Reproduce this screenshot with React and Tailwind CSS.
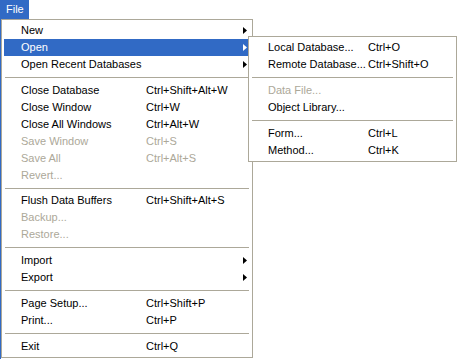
import React from "react";

const Arrow = ({ white }) => (
  <svg width="4" height="7" viewBox="0 0 4 7" className="block">
    <polygon points="0,0 4,3.5 0,7" fill={white ? "#ffffff" : "#000000"} />
  </svg>
);

const mainItems = [
  { label: "New", sub: true },
  { label: "Open", sub: true, active: true },
  { label: "Open Recent Databases", sub: true },
  { sep: true },
  { label: "Close Database", sc: "Ctrl+Shift+Alt+W" },
  { label: "Close Window", sc: "Ctrl+W" },
  { label: "Close All Windows", sc: "Ctrl+Alt+W" },
  { label: "Save Window", sc: "Ctrl+S", dis: true },
  { label: "Save All", sc: "Ctrl+Alt+S", dis: true },
  { label: "Revert...", dis: true },
  { sep: true },
  { label: "Flush Data Buffers", sc: "Ctrl+Shift+Alt+S" },
  { label: "Backup...", dis: true },
  { label: "Restore...", dis: true },
  { sep: true },
  { label: "Import", sub: true },
  { label: "Export", sub: true },
  { sep: true },
  { label: "Page Setup...", sc: "Ctrl+Shift+P" },
  { label: "Print...", sc: "Ctrl+P" },
  { sep: true },
  { label: "Exit", sc: "Ctrl+Q" },
];

const subItems = [
  { label: "Local Database...", sc: "Ctrl+O" },
  { label: "Remote Database...", sc: "Ctrl+Shift+O" },
  { sep: true },
  { label: "Data File...", dis: true },
  { label: "Object Library..." },
  { sep: true },
  { label: "Form...", sc: "Ctrl+L" },
  { label: "Method...", sc: "Ctrl+K" },
];

function Row({ it, labelW }) {
  if (it.sep) {
    return (
      <div className="h-[9px] flex items-center px-[1px]">
        <div className="h-px w-full bg-[#ACA899]" />
      </div>
    );
  }
  const color = it.active
    ? "bg-[#316AC5] text-white"
    : it.dis
    ? "text-[#ACA899]"
    : "text-black";
  return (
    <div className={`h-[17px] flex items-center pl-[17px] pr-[3px] whitespace-nowrap ${color}`}>
      <span className={labelW}>{it.label}</span>
      <span className="flex-1">{it.sc || ""}</span>
      <span className="w-[4px]">{it.sub ? <Arrow white={it.active} /> : null}</span>
    </div>
  );
}

export default function App() {
  return (
    <div
      className="relative w-[459px] h-[359px] bg-white overflow-hidden text-[11px] leading-none"
      style={{ fontFamily: '"Liberation Sans", Arial, sans-serif' }}
    >
      <div className="h-[19px] flex">
        <div className="w-[29px] h-[19px] bg-[#316AC5] text-white flex items-center pl-[6px]">
          File
        </div>
      </div>
      <div className="flex h-[340px]">
        <div className="w-px bg-[#316AC5]" />
        <div className="w-[252px] h-[339px] border border-[#ACA899] bg-white p-[2px] flex flex-col">
          {mainItems.map((it, i) => (
            <Row key={i} it={it} labelW="w-[125px]" />
          ))}
        </div>
      </div>
      <div className="absolute left-[248px] top-[36px] w-[209px] border border-[#ACA899] bg-white p-[2px] flex flex-col">
        {subItems.map((it, i) => (
          <Row key={i} it={it} labelW="w-[100px]" />
        ))}
      </div>
    </div>
  );
}
